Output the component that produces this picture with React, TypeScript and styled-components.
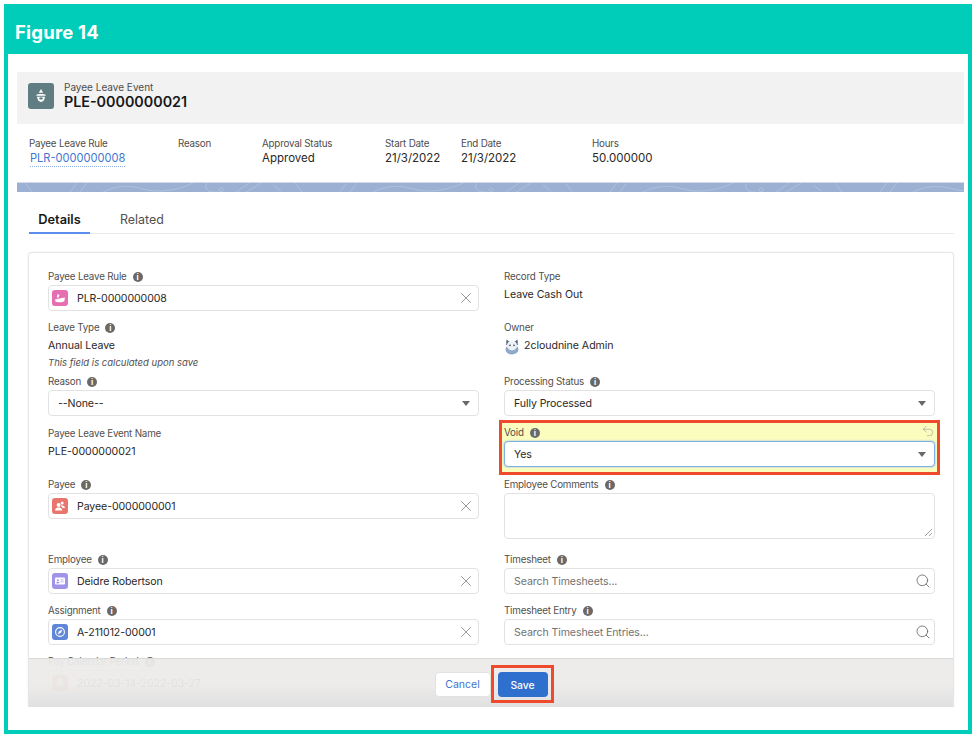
import React from "react";
import styled, { createGlobalStyle } from "styled-components";
import { X, Search, Undo2 } from "lucide-react";

const GlobalStyle = createGlobalStyle`
  html, body {
    margin: 0;
    background: #fff;
    font-family: Inter, "Liberation Sans", sans-serif;
    color: #2b2826;
  }
  * { box-sizing: border-box; }
`;

const Frame = styled.div`
  width: 968px;
  height: 730px;
  margin: 4px 0 0 4px;
  border: 4px solid #00cdb9;
  border-top: 0;
  display: flex;
  flex-direction: column;
`;

const FigureBar = styled.div`
  height: 50px;
  margin: 0 -4px;
  padding-left: 11px;
  background: #00cdb9;
  color: #fff;
  font-size: 18.5px;
  font-weight: 700;
  letter-spacing: 0.2px;
  line-height: 57px;
`;

const Shot = styled.div`
  flex: 1;
  min-height: 0;
  padding: 18px 4px 23px 9px;
`;

const Record = styled.div`
  height: 635px;
  overflow: hidden;
`;

const TitleBand = styled.div`
  height: 52px;
  padding: 0 0 4px 11px;
  background: #f2f2f2;
  display: flex;
  align-items: center;
  gap: 10px;
`;

const ObjectIcon = styled.div`
  width: 26px;
  height: 26px;
  border-radius: 3px;
  background: #5f7d82;
  display: flex;
  align-items: center;
  justify-content: center;
`;

const TitleText = styled.div`
  display: flex;
  flex-direction: column;
`;

const ObjectName = styled.div`
  font-size: 10px;
  line-height: 12px;
  color: #4f4d4b;
`;

const RecordName = styled.div`
  font-size: 14.3px;
  font-weight: 600;
  line-height: 18px;
  color: #181818;
`;

const Highlights = styled.div`
  height: 58px;
  padding: 13px 0 0 12px;
  display: flex;
`;

const HighlightItem = styled.div<{ $width: number }>`
  width: ${(p) => p.$width}px;
`;

const HighlightLabel = styled.div`
  font-size: 9.8px;
  letter-spacing: -0.2px;
  line-height: 13px;
  color: #4f4d4b;
`;

const HighlightValue = styled.div`
  font-size: 11.5px;
  line-height: 16px;
  color: #2b2826;
`;

const RecordLink = styled.a`
  display: block;
  width: fit-content;
  margin: 1px 0 0 1px;
  font-size: 11.1px;
  line-height: 15px;
  color: #3f74cf;
  border-bottom: 1px dotted #8fb0e6;
`;

const Banner = styled.svg`
  display: block;
  width: 100%;
  height: 10px;
  background: #9bb0d2;
  border-top: 1px solid #d3dae6;
`;

const Tabs = styled.div`
  height: 42px;
  margin: 0 10px 0 12px;
  border-bottom: 1px solid #ebebeb;
  display: flex;
`;

const Tab = styled.div<{ $active?: boolean }>`
  height: 42px;
  width: ${(p) => (p.$active ? "61px" : "auto")};
  margin-left: ${(p) => (p.$active ? "0" : "30px")};
  text-align: center;
  font-size: ${(p) => (p.$active ? "12.8px" : "12.4px")};
  line-height: 55px;
  font-weight: ${(p) => (p.$active ? 600 : 400)};
  color: ${(p) => (p.$active ? "#181818" : "#514f4d")};
  border-bottom: ${(p) => (p.$active ? "2px solid #5b8def" : "0")};
`;

const Card = styled.div`
  position: relative;
  height: 455px;
  margin: 18px 10px 0 11px;
  padding: 16px 18px 0 19px;
  border: 1px solid #e6e6e6;
  border-bottom: 0;
  border-radius: 4px 4px 0 0;
  box-shadow: 0 0 2px rgba(0, 0, 0, 0.08);
  overflow: hidden;
`;

const FormGrid = styled.div`
  display: grid;
  grid-template-columns: 431px 431px;
  grid-template-rows: 51px 54px 52px 51px 75px 51px 51px 51px;
  column-gap: 25px;
`;

const Field = styled.div`
  min-width: 0;
`;

const ChangedField = styled.div`
  position: relative;
  align-self: start;
  height: 55px;
  margin: -6px -5px 0;
  padding: 2px 2px 0;
  background: #fbfdbf;
  border: 3px solid #ee4a2b;
`;

const Label = styled.div`
  height: 14px;
  padding-top: 2px;
  display: flex;
  align-items: center;
  gap: 6px;
  font-size: 9.8px;
  letter-spacing: -0.2px;
  line-height: 12px;
  color: #514f4d;
`;

const InfoDot = styled.span`
  width: 10px;
  height: 10px;
  border-radius: 50%;
  background: #6b6967;
  color: #fff;
  font-size: 8px;
  font-weight: 700;
  letter-spacing: 0;
  line-height: 10px;
  text-align: center;
`;

const ReadValue = styled.div`
  margin-top: 5px;
  height: 14px;
  display: flex;
  align-items: center;
  gap: 4px;
  font-size: 10.6px;
  letter-spacing: -0.05px;
  line-height: 14px;
  color: #2b2826;
`;

const Note = styled.div`
  margin-top: 3px;
  font-size: 9.5px;
  font-style: italic;
  line-height: 14px;
  color: #514f4d;
`;

const Control = styled.div<{ $focused?: boolean; $tall?: boolean }>`
  position: relative;
  height: ${(p) => (p.$tall ? "46px" : "26px")};
  margin-top: 2px;
  padding: 0 3px 0 ${(p) => (p.$tall ? "9px" : "3px")};
  display: flex;
  align-items: center;
  gap: 9px;
  background: #fff;
  border: 1px solid ${(p) => (p.$focused ? "#7fb0ea" : "#e2e2e2")};
  border-radius: 4px;
  box-shadow: ${(p) => (p.$focused ? "0 0 2px #7fb0ea" : "none")};
  font-size: 10.6px;
  letter-spacing: -0.1px;
  color: #2b2826;
`;

const PlainText = styled.span<{ $muted?: boolean }>`
  flex: 1;
  padding-left: 6px;
  color: ${(p) => (p.$muted ? "#74726f" : "#2b2826")};
`;

const ValueText = styled.span`
  flex: 1;
`;

const Pill = styled.span<{ $bg: string }>`
  width: 16px;
  height: 16px;
  border-radius: 3px;
  background: ${(p) => p.$bg};
  display: flex;
  align-items: center;
  justify-content: center;
`;

const Caret = styled.span`
  margin-right: 5px;
  width: 0;
  height: 0;
  border-left: 4px solid transparent;
  border-right: 4px solid transparent;
  border-top: 5px solid #6b6967;
`;

const Grip = styled.svg`
  position: absolute;
  right: 1px;
  bottom: 1px;
  width: 9px;
  height: 9px;
`;

const UndoMark = styled.span`
  position: absolute;
  right: 2px;
  top: 1px;
  display: flex;
  color: #a6a695;
`;

const Footer = styled.div`
  position: absolute;
  left: 0;
  right: 0;
  bottom: 0;
  height: 49px;
  padding-top: 13px;
  display: flex;
  justify-content: center;
  gap: 7px;
  background: linear-gradient(rgba(236, 235, 234, 0.95), rgba(236, 235, 234, 0.95) 50%, rgba(224, 224, 224, 0.98));
  border-top: 1px solid #d9d9d9;
`;

const CancelButton = styled.div`
  width: 56px;
  height: 25px;
  background: #fff;
  border: 1px solid #e2e2e2;
  border-radius: 4px;
  text-align: center;
  font-size: 10.5px;
  line-height: 24px;
  color: #3f74cf;
`;

const SaveWrap = styled.div`
  position: relative;
`;

const SaveButton = styled.div`
  width: 50px;
  height: 25px;
  background: #2f6fce;
  border-radius: 4px;
  text-align: center;
  font-size: 10.3px;
  font-weight: 500;
  line-height: 26px;
  color: #fff;
`;

const RedBox = styled.div`
  position: absolute;
  left: -7px;
  top: -7px;
  width: 63px;
  height: 38px;
  border: 3px solid #ee4a2b;
`;

const Clear = () => <X size={18} strokeWidth={0.9} color="#6b6967" />;

const Magnifier = () => <Search size={16} strokeWidth={1.3} color="#6b6967" />;

const LeaveGlyph = () => (
  <svg width="12" height="12" viewBox="0 0 12 12" fill="#fff">
    <path d="M1 7.5 5.5 6.5 11 5.5 10.2 9.5C8 10.5 3.5 10.5 1.6 9.8Z" />
    <path d="M3.5 2 5.5 3 4.5 5.5 2.8 5.8Z" />
  </svg>
);

const PayeeGlyph = () => (
  <svg width="12" height="12" viewBox="0 0 12 12" fill="#fff">
    <circle cx="4.6" cy="5" r="2" />
    <path d="M1 10.5C1.2 8 3 7.4 4.6 7.4S8 8 8.2 10.5Z" />
    <circle cx="8.2" cy="3" r="1.5" />
    <path d="M7 5.6C9 5 10.8 5.8 11 8H8.6C8.4 7.2 7.8 6.6 7 6.3Z" />
  </svg>
);

const CardGlyph = () => (
  <svg width="12" height="12" viewBox="0 0 12 12">
    <rect x="1" y="2.5" width="10" height="7" rx="1" fill="#fff" />
    <circle cx="3.8" cy="5.2" r="1" fill="#a094e8" />
    <path d="M2.5 8C2.6 6.8 5 6.8 5.1 8Z M6.5 4.8H9.6M6.5 6.8H9.6" fill="#a094e8" stroke="#a094e8" strokeWidth="0.7" />
  </svg>
);

const CompassGlyph = () => (
  <svg width="12" height="12" viewBox="0 0 12 12" fill="none" stroke="#fff">
    <circle cx="6" cy="6" r="4.4" strokeWidth="1.1" />
    <path d="M8 4 6.8 6.8 4 8 5.2 5.2Z" fill="#fff" strokeWidth="0.4" />
  </svg>
);

const BellGlyph = () => (
  <svg width="12" height="12" viewBox="0 0 12 12" fill="#fff">
    <path d="M6 1.5C4 1.5 3.2 3 3.2 5 3.2 7 2.4 7.8 1.8 8.6H10.2C9.6 7.8 8.8 7 8.8 5 8.8 3 8 1.5 6 1.5Z" />
    <path d="M4.8 9.4H7.2C7 10.8 5 10.8 4.8 9.4Z" />
  </svg>
);

const AvatarGlyph = () => (
  <svg width="16" height="18" viewBox="0 0 16 18">
    <ellipse cx="8" cy="12.5" rx="6.5" ry="5" fill="#8fa9c9" />
    <path d="M2.4 2.4 5.2 4.4H10.8L13.6 2.4 13.8 8H2.2Z" fill="#54657f" />
    <circle cx="8" cy="8.5" r="5" fill="#eef2f6" />
    <circle cx="6" cy="8.4" r="0.8" fill="#3b4658" />
    <circle cx="10" cy="8.4" r="0.8" fill="#3b4658" />
  </svg>
);

const LookupControl = ({ bg, glyph, value }: { bg: string; glyph: React.ReactNode; value: string }) => (
  <Control>
    <Pill $bg={bg}>{glyph}</Pill>
    <ValueText>{value}</ValueText>
    <Clear />
  </Control>
);

const SelectControl = ({ value, focused }: { value: string; focused?: boolean }) => (
  <Control $focused={focused}>
    <PlainText>{value}</PlainText>
    <Caret />
  </Control>
);

const SearchControl = ({ placeholder }: { placeholder: string }) => (
  <Control>
    <PlainText $muted>{placeholder}</PlainText>
    <Magnifier />
  </Control>
);

const FieldLabel = ({ text, info = true }: { text: string; info?: boolean }) => (
  <Label>
    {text}
    {info && <InfoDot>i</InfoDot>}
  </Label>
);

const highlights = [
  { label: "Reason", value: "", width: 84 },
  { label: "Approval Status", value: "Approved", width: 123 },
  { label: "Start Date", value: "21/3/2022", width: 76 },
  { label: "End Date", value: "21/3/2022", width: 131 },
  { label: "Hours", value: "50.000000", width: 100 },
];

export default function App() {
  return (
    <>
      <GlobalStyle />
      <Frame>
        <FigureBar>Figure 14</FigureBar>
        <Shot>
          <Record>
            <TitleBand>
              <ObjectIcon>
                <svg width="16" height="18" viewBox="0 0 16 18" fill="#fff">
                  <path d="M8 2 10.2 5.8H5.8Z" />
                  <path d="M3 8C5 6.6 11 6.6 13 8 12.8 8.6 12.4 8.8 12 8.8H4C3.6 8.8 3.2 8.6 3 8Z" />
                  <path d="M4 9.8H12C11.8 12.8 10 15 8 15S4.2 12.8 4 9.8Z" />
                  <ellipse cx="8" cy="11.4" rx="1.7" ry="1.2" fill="#5f7d82" />
                </svg>
              </ObjectIcon>
              <TitleText>
                <ObjectName>Payee Leave Event</ObjectName>
                <RecordName>PLE-0000000021</RecordName>
              </TitleText>
            </TitleBand>

            <Highlights>
              <HighlightItem $width={149}>
                <HighlightLabel>Payee Leave Rule</HighlightLabel>
                <RecordLink>PLR-0000000008</RecordLink>
              </HighlightItem>
              {highlights.map((h) => (
                <HighlightItem key={h.label} $width={h.width}>
                  <HighlightLabel>{h.label}</HighlightLabel>
                  <HighlightValue>{h.value}</HighlightValue>
                </HighlightItem>
              ))}
            </Highlights>

            <Banner preserveAspectRatio="none">
              <defs>
                <pattern id="topo" width="270" height="10" patternUnits="userSpaceOnUse">
                  <g fill="none" stroke="#b4c4de" strokeWidth="0.8">
                    <path d="M8 0 16 10M60 0 52 10M70 0 62 10M84 10C100 2 112 2 126 6S160 8 176 0" />
                    <path d="M190 0C186 6 192 10 200 9M204 5a2 2 0 1 0 .1 0M232 0 218 10M244 0 228 10M256 2 264 8" />
                  </g>
                </pattern>
              </defs>
              <rect width="100%" height="100%" fill="url(#topo)" />
            </Banner>

            <Tabs>
              <Tab $active>Details</Tab>
              <Tab>Related</Tab>
            </Tabs>

            <Card>
              <FormGrid>
                <Field>
                  <FieldLabel text="Payee Leave Rule" />
                  <LookupControl bg="#e56fb0" glyph={<LeaveGlyph />} value="PLR-0000000008" />
                </Field>
                <Field>
                  <FieldLabel text="Record Type" info={false} />
                  <ReadValue>Leave Cash Out</ReadValue>
                </Field>

                <Field>
                  <FieldLabel text="Leave Type" />
                  <ReadValue>Annual Leave</ReadValue>
                  <Note>This field is calculated upon save</Note>
                </Field>
                <Field>
                  <FieldLabel text="Owner" info={false} />
                  <ReadValue>
                    <AvatarGlyph />
                    2cloudnine Admin
                  </ReadValue>
                </Field>

                <Field>
                  <FieldLabel text="Reason" />
                  <SelectControl value="--None--" />
                </Field>
                <Field>
                  <FieldLabel text="Processing Status" />
                  <SelectControl value="Fully Processed" />
                </Field>

                <Field>
                  <FieldLabel text="Payee Leave Event Name" info={false} />
                  <ReadValue>PLE-0000000021</ReadValue>
                </Field>
                <ChangedField>
                  <FieldLabel text="Void" />
                  <UndoMark>
                    <Undo2 size={14} strokeWidth={1.2} />
                  </UndoMark>
                  <SelectControl value="Yes" focused />
                </ChangedField>

                <Field>
                  <FieldLabel text="Payee" />
                  <LookupControl bg="#e8766e" glyph={<PayeeGlyph />} value="Payee-0000000001" />
                </Field>
                <Field>
                  <FieldLabel text="Employee Comments" />
                  <Control $tall>
                    <Grip viewBox="0 0 9 9">
                      <path d="M1 8 8 1M5 8 8 5" stroke="#8a8886" strokeWidth="0.8" />
                    </Grip>
                  </Control>
                </Field>

                <Field>
                  <FieldLabel text="Employee" />
                  <LookupControl bg="#a094e8" glyph={<CardGlyph />} value="Deidre Robertson" />
                </Field>
                <Field>
                  <FieldLabel text="Timesheet" />
                  <SearchControl placeholder="Search Timesheets..." />
                </Field>

                <Field>
                  <FieldLabel text="Assignment" />
                  <LookupControl bg="#5f86d8" glyph={<CompassGlyph />} value="A-211012-00001" />
                </Field>
                <Field>
                  <FieldLabel text="Timesheet Entry" />
                  <SearchControl placeholder="Search Timesheet Entries..." />
                </Field>

                <Field>
                  <FieldLabel text="Pay Calendar Period" />
                  <LookupControl bg="#e8766e" glyph={<BellGlyph />} value="2022-03-14-2022-03-27" />
                </Field>
              </FormGrid>

              <Footer>
                <CancelButton>Cancel</CancelButton>
                <SaveWrap>
                  <SaveButton>Save</SaveButton>
                  <RedBox />
                </SaveWrap>
              </Footer>
            </Card>
          </Record>
        </Shot>
      </Frame>
    </>
  );
}
